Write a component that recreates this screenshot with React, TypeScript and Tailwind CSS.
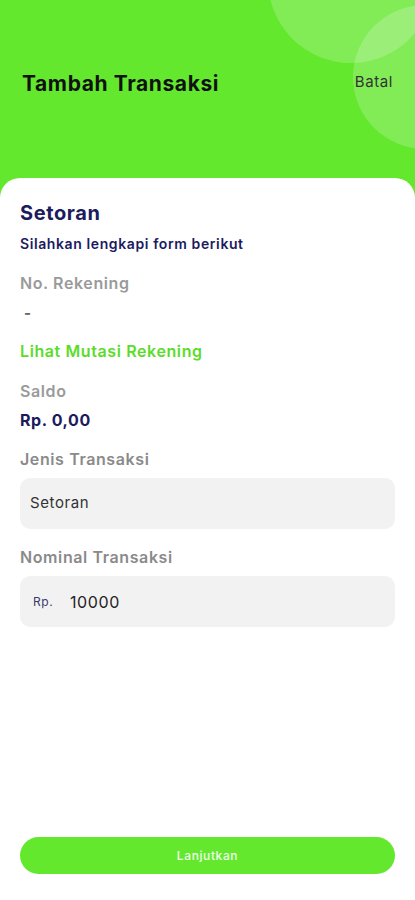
import React from 'react';

const App: React.FC = () => {
  return (
    <div className="relative h-[900px] w-full overflow-hidden bg-[#63e82e] flex flex-col" style={{ fontFamily: 'Inter, "Noto Sans", sans-serif' }}>
      {/* Decorative circles */}
      <div className="absolute left-[268px] top-[-103px] h-[166px] w-[166px] rounded-full bg-white/20" />
      <div className="absolute left-[353px] top-[5px] h-[144px] w-[144px] rounded-full bg-white/20" />

      {/* Header */}
      <div className="relative h-[178px] flex items-center justify-between pl-[22px] pr-[22px] pb-[10px]">
        <h1 className="text-[21px] font-bold text-[#111] tracking-[0.6px]">Tambah Transaksi</h1>
        <span className="text-[15px] text-[#333] tracking-[0.6px] -mt-[4px]">Batal</span>
      </div>

      {/* Card */}
      <div className="relative flex-1 bg-white rounded-t-[20px] px-[20px] pt-[22px] flex flex-col tracking-[0.6px]">
        <h2 className="text-[20px] font-bold text-[#1b1b5e] leading-[26px]">Setoran</h2>
        <p className="mt-[8px] text-[14px] font-semibold text-[#1b1b5e] leading-[20px]">Silahkan lengkapi form berikut</p>

        <p className="mt-[18px] text-[16px] font-semibold text-[#9a9a9a] leading-[22px]">No. Rekening</p>
        <p className="mt-[8px] pl-[4px] text-[15px] font-bold text-[#666] leading-[22px]">-</p>

        <p className="mt-[16px] text-[16px] font-semibold text-[#5cdc2a] leading-[22px]">Lihat Mutasi Rekening</p>

        <p className="mt-[18px] text-[16px] font-semibold text-[#9a9a9a] leading-[22px]">Saldo</p>
        <p className="mt-[7px] text-[16px] font-bold text-[#1b1b5e] leading-[22px]">Rp. 0,00</p>

        <p className="mt-[17px] text-[16px] font-semibold text-[#8a8a8a] leading-[22px]">Jenis Transaksi</p>
        <div className="mt-[8px] h-[51px] rounded-[10px] bg-[#f2f2f2] flex items-center px-[10px]">
          <span className="text-[15px] text-[#333]">Setoran</span>
        </div>

        <p className="mt-[17px] text-[16px] font-semibold text-[#8a8a8a] leading-[22px]">Nominal Transaksi</p>
        <div className="mt-[8px] h-[51px] rounded-[10px] bg-[#f2f2f2] flex items-center px-[13px]">
          <span className="text-[12px] text-[#3a3a6a] w-[37px]">Rp.</span>
          <span className="text-[16px] text-[#222]">10000</span>
        </div>

        <div className="flex-1" />

        <button className="mb-[26px] h-[37px] w-full rounded-full bg-[#63e82e] text-[12px] font-medium text-white/90">
          Lanjutkan
        </button>
      </div>
    </div>
  );
};

export default App;
